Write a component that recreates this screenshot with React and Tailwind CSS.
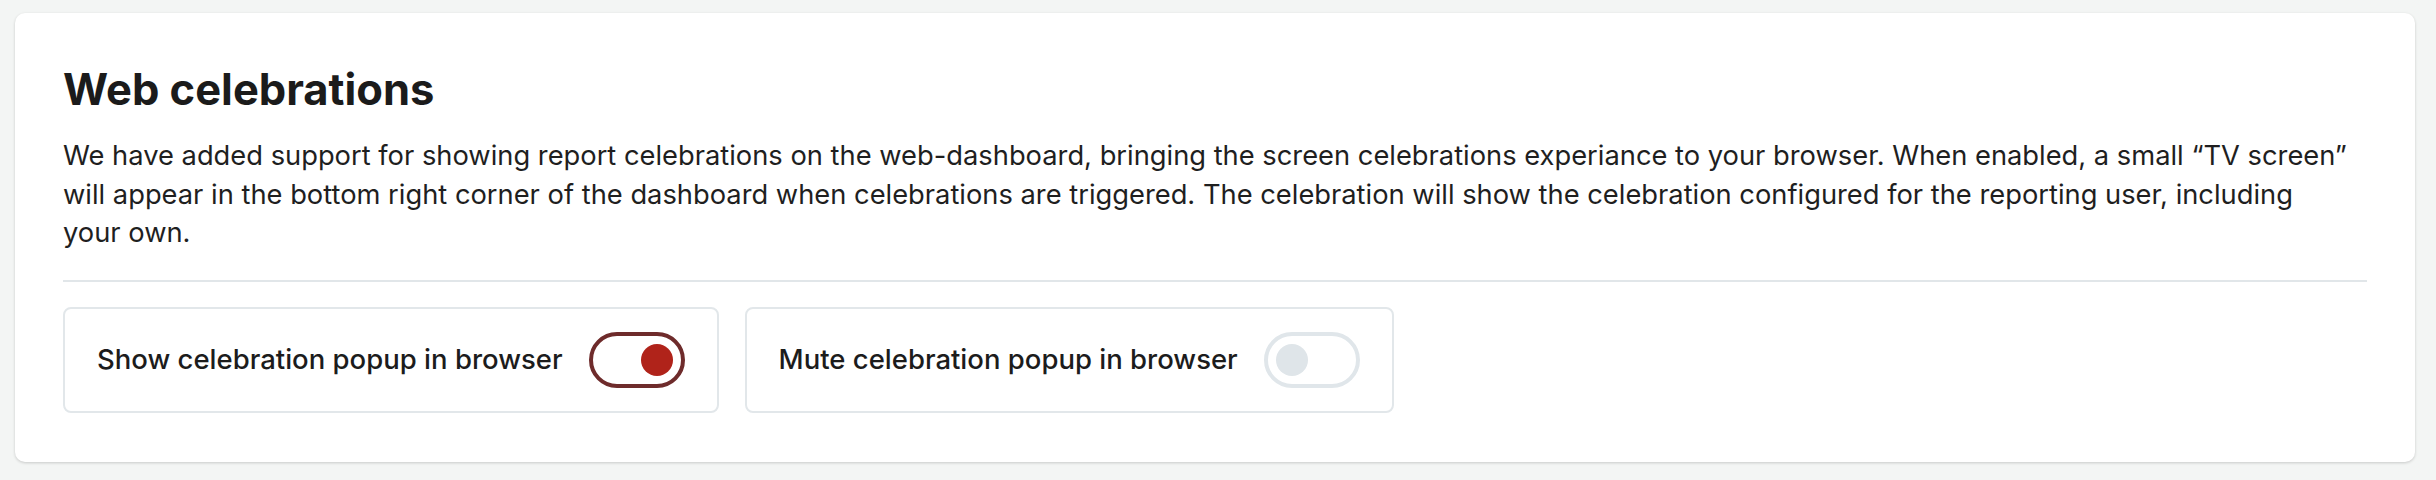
import React from "react";

function Toggle({ on }) {
  return (
    <div
      className={
        "flex h-[56px] w-[96px] shrink-0 items-center rounded-full border-4 px-[8px] " +
        (on ? "justify-end border-[#6e2b2b]" : "justify-start border-[#e0e6ea]")
      }
    >
      <div className={"h-[32px] w-[32px] rounded-full " + (on ? "bg-[#b0231a]" : "bg-[#dfe5e9]")} />
    </div>
  );
}

function ToggleCard({ label, on }) {
  return (
    <div className="flex items-center gap-[26px] rounded-[8px] border-2 border-[#e2e7ea] px-8 py-[23px]">
      <span className="text-[27.5px] font-medium leading-none text-[#1c1c1c]">{label}</span>
      <Toggle on={on} />
    </div>
  );
}

export default function App() {
  return (
    <div
      className="min-h-[480px] bg-[#f3f5f4] pl-[15px] pt-[13px]"
      style={{ fontFamily: "Inter, 'Liberation Sans', sans-serif" }}
    >
      <div className="w-[2400px] rounded-[10px] bg-white px-12 pb-[49px] pt-[50px] shadow-[0_1px_3px_rgba(0,0,0,0.18)]">
        <h1 className="text-[43.5px] font-bold leading-[52px] text-[#1b1b1b]">Web celebrations</h1>
        <p className="mt-[22px] text-[27.3px] leading-[38.5px] text-[#1f1f1f]">
          We have added support for showing report celebrations on the web-dashboard, bringing the screen celebrations
          experiance to your browser. When enabled, a small “TV screen”
          <br />
          will appear in the bottom right corner of the dashboard when celebrations are triggered. The celebration will
          show the celebration configured for the reporting user, including
          <br />
          your own.
        </p>
        <div className="mt-[27px] h-[2px] bg-[#e1e6e9]" />
        <div className="mt-[25px] flex gap-[26px]">
          <ToggleCard label="Show celebration popup in browser" on={true} />
          <ToggleCard label="Mute celebration popup in browser" on={false} />
        </div>
      </div>
    </div>
  );
}
